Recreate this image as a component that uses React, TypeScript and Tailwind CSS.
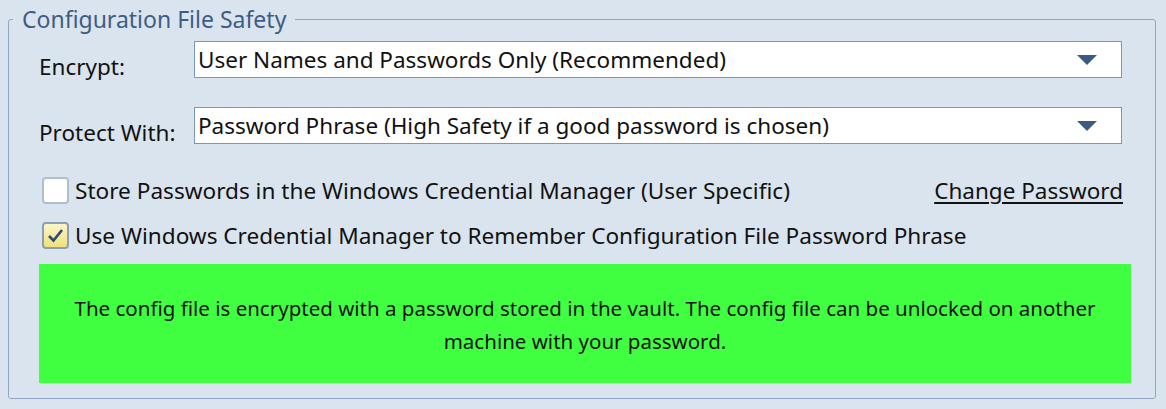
import React from "react";

function Combo({ value }: { value: string }) {
  return (
    <div className="flex h-[37px] w-[928px] items-center justify-between border border-[#7b97b8] bg-white pl-[3px] pr-[24px]">
      <span className="text-[22.5px] leading-[35px] text-[#111]">{value}</span>
      <svg width="20" height="10" viewBox="0 0 20 10">
        <polygon points="0,0 20,0 10,10" fill="#3d5a80" />
      </svg>
    </div>
  );
}

function Check({ checked }: { checked?: boolean }) {
  if (checked) {
    return (
      <div className="flex h-[27px] w-[27px] items-center justify-center rounded-[4px] border-2 border-[#8d9fb3] bg-gradient-to-b from-[#fcf6c8] to-[#efe07c]">
        <svg width="17" height="15" viewBox="0 0 17 15">
          <path d="M2 8 L6.5 12.5 L15 2" fill="none" stroke="#2f4a72" strokeWidth="2.6" />
        </svg>
      </div>
    );
  }
  return <div className="h-[27px] w-[27px] rounded-[4px] border-2 border-[#aebfcf] bg-white" />;
}

export default function App() {
  return (
    <div className="h-[409px] w-[1166px] bg-[#dae4ee] pl-[8px] pt-[4px] font-['Segoe_UI','Noto_Sans',sans-serif] text-[#111]">
      <fieldset className="h-[395px] w-[1148px] rounded-[3px] border border-[#8fa7c4]">
        <legend className="ml-[4px] px-[9px] text-[23px] leading-[30px] text-[#3d5d85]">
          Configuration File Safety
        </legend>

        <div className="flex flex-col pl-[30px]">
          <div className="mt-[7px] flex h-[37px] items-start">
            <span className="mt-[13px] w-[155px] text-[22.5px] leading-[26px]">Encrypt:</span>
            <Combo value="User Names and Passwords Only (Recommended)" />
          </div>

          <div className="mt-[29px] flex h-[37px] items-start">
            <span className="mt-[13px] w-[155px] text-[22.5px] leading-[26px]">Protect With:</span>
            <Combo value="Password Phrase (High Safety if a good password is chosen)" />
          </div>

          <div className="mt-[33px] flex h-[27px] w-[1084px] items-center">
            <div className="ml-[3px]">
              <Check />
            </div>
            <span className="ml-[6px] text-[22.6px] leading-[27px]">
              Store Passwords in the Windows Credential Manager (User Specific)
            </span>
            <span className="ml-auto text-[22.5px] leading-[27px] underline underline-offset-[3px]">
              Change Password
            </span>
          </div>

          <div className="mt-[18px] flex h-[27px] items-center">
            <div className="ml-[3px]">
              <Check checked />
            </div>
            <span className="ml-[6px] text-[22.6px] leading-[27px]">
              Use Windows Credential Manager to Remember Configuration File Password Phrase
            </span>
          </div>

          <div className="mt-[15px] flex h-[119px] w-[1092px] items-center justify-center bg-[#40ff40] px-[20px] pt-[3px] text-center text-[20.5px] leading-[33px] text-[#111]">
            The config file is encrypted with a password stored in the vault. The config file can be unlocked on another
            machine with your password.
          </div>
        </div>
      </fieldset>
    </div>
  );
}
